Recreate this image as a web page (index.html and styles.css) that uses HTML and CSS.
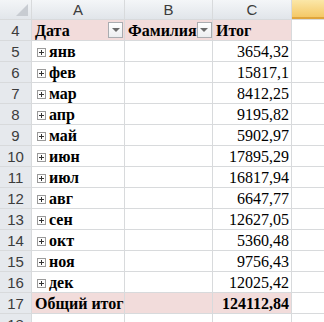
FILE: index.html
```html
<!DOCTYPE html>
<html>
<head>
<meta charset="utf-8">
<link rel="stylesheet" href="styles.css">
</head>
<body>
<div class="sheet">
  <div class="corner"><span class="tri"></span></div>
  <div class="colh">A</div>
  <div class="colh">B</div>
  <div class="colh">C</div>
  <div class="colh hot"></div>

  <div class="rowh">4</div>
  <div class="cell pink b hdr"><span>Дата</span><span class="dd"></span></div>
  <div class="cell pink b hdr"><span>Фамилия</span><span class="dd"></span></div>
  <div class="cell pink b">Итог</div>
  <div class="cell"></div>

  <div class="rowh">5</div><div class="cell b"><span class="pl"></span>янв</div><div class="cell"></div><div class="cell num">3654,32</div><div class="cell"></div>
  <div class="rowh">6</div><div class="cell b"><span class="pl"></span>фев</div><div class="cell"></div><div class="cell num">15817,1</div><div class="cell"></div>
  <div class="rowh">7</div><div class="cell b"><span class="pl"></span>мар</div><div class="cell"></div><div class="cell num">8412,25</div><div class="cell"></div>
  <div class="rowh">8</div><div class="cell b"><span class="pl"></span>апр</div><div class="cell"></div><div class="cell num">9195,82</div><div class="cell"></div>
  <div class="rowh">9</div><div class="cell b"><span class="pl"></span>май</div><div class="cell"></div><div class="cell num">5902,97</div><div class="cell"></div>
  <div class="rowh">10</div><div class="cell b"><span class="pl"></span>июн</div><div class="cell"></div><div class="cell num">17895,29</div><div class="cell"></div>
  <div class="rowh">11</div><div class="cell b"><span class="pl"></span>июл</div><div class="cell"></div><div class="cell num">16817,94</div><div class="cell"></div>
  <div class="rowh">12</div><div class="cell b"><span class="pl"></span>авг</div><div class="cell"></div><div class="cell num">6647,77</div><div class="cell"></div>
  <div class="rowh">13</div><div class="cell b"><span class="pl"></span>сен</div><div class="cell"></div><div class="cell num">12627,05</div><div class="cell"></div>
  <div class="rowh">14</div><div class="cell b"><span class="pl"></span>окт</div><div class="cell"></div><div class="cell num">5360,48</div><div class="cell"></div>
  <div class="rowh">15</div><div class="cell b"><span class="pl"></span>ноя</div><div class="cell"></div><div class="cell num">9756,43</div><div class="cell"></div>
  <div class="rowh">16</div><div class="cell b"><span class="pl"></span>дек</div><div class="cell"></div><div class="cell num">12025,42</div><div class="cell"></div>

  <div class="rowh">17</div>
  <div class="cell pink b total">Общий итог</div>
  <div class="cell pink"></div>
  <div class="cell pink b num">124112,84</div>
  <div class="cell"></div>

  <div class="rowh">18</div><div class="cell"></div><div class="cell"></div><div class="cell"></div><div class="cell"></div>
</div>
</body>
</html>
```

FILE: styles.css
```css
html, body {
  margin: 0;
  padding: 0;
  background: #ffffff;
}
body {
  width: 324px;
  height: 322px;
  overflow: hidden;
}
.sheet {
  display: grid;
  grid-template-columns: 31px 92px 87px 78px 1fr;
  grid-template-rows: 19px repeat(15, 20px);
  gap: 1px;
  background: #d8dadc;
  width: 324px;
}
.corner {
  background: linear-gradient(#f3f5f7, #e2e6eb);
  position: relative;
}
.tri {
  position: absolute;
  right: 3px;
  bottom: 3px;
  width: 0;
  height: 0;
  border-left: 12px solid transparent;
  border-bottom: 12px solid #c8ccd2;
}
.colh {
  background: linear-gradient(#f4f6f8, #e1e5ea);
  font-family: "Liberation Sans", Arial, sans-serif;
  font-size: 15px;
  color: #3c3c3c;
  display: flex;
  align-items: center;
  justify-content: center;
}
.colh.hot {
  background: linear-gradient(#fbe7a8, #f4c55f);
  box-shadow: inset 0 -2px 0 #e0a53c;
}
.rowh {
  background: #e6e9ed;
  font-family: "Liberation Sans", Arial, sans-serif;
  font-size: 15px;
  color: #3c3c3c;
  display: flex;
  align-items: center;
  justify-content: center;
}
.cell {
  background: #ffffff;
  font-family: "Liberation Serif", "Times New Roman", Tinos, "DejaVu Serif", serif;
  font-size: 16px;
  color: #000;
  display: flex;
  align-items: center;
  padding: 2px 3px 0 3px;
  white-space: nowrap;
  overflow: hidden;
}
.pink {
  background: #f2dcdb;
}
.b {
  font-weight: bold;
}
.num {
  justify-content: flex-end;
  padding-right: 2px;
}
.hdr {
  justify-content: space-between;
  padding-right: 1px;
}
.dd {
  width: 13px;
  height: 14px;
  margin-top: -2px;
  border: 1px solid #a9acb0;
  background: linear-gradient(#ffffff, #eceef0);
  display: flex;
  align-items: center;
  justify-content: center;
  flex: none;
}
.dd::after {
  content: "";
  width: 0;
  height: 0;
  border-left: 4px solid transparent;
  border-right: 4px solid transparent;
  border-top: 4px solid #6b6b6b;
}
.pl {
  width: 7px;
  height: 7px;
  border: 1px solid #9a9a9a;
  margin: 0 3px 0 2px;
  position: relative;
  flex: none;
  background: #fdfdfd;
}
.pl::before {
  content: "";
  position: absolute;
  left: 1px;
  top: 3px;
  width: 5px;
  height: 1px;
  background: #333;
}
.pl::after {
  content: "";
  position: absolute;
  left: 3px;
  top: 1px;
  width: 1px;
  height: 5px;
  background: #333;
}
```
